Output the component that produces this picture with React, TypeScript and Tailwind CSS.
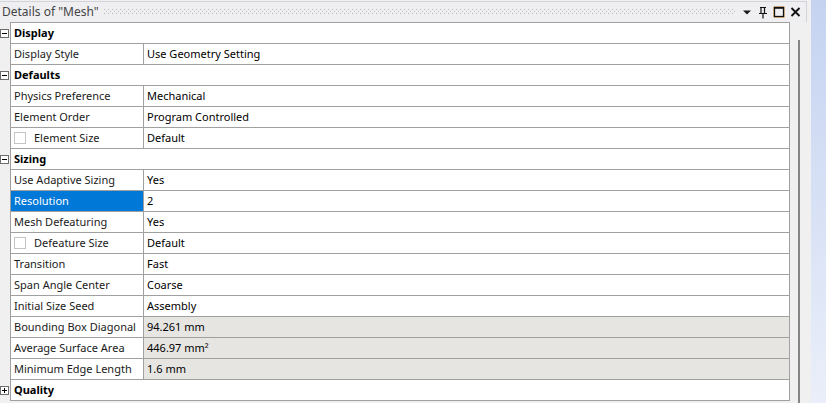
import React from 'react';

type Row =
  | { kind: 'header'; label: string; collapsed?: boolean }
  | { kind: 'prop'; label: string; value: string; check?: boolean; selected?: boolean; readonly?: boolean };

const rows: Row[] = [
  { kind: 'header', label: 'Display' },
  { kind: 'prop', label: 'Display Style', value: 'Use Geometry Setting' },
  { kind: 'header', label: 'Defaults' },
  { kind: 'prop', label: 'Physics Preference', value: 'Mechanical' },
  { kind: 'prop', label: 'Element Order', value: 'Program Controlled' },
  { kind: 'prop', label: 'Element Size', value: 'Default', check: true },
  { kind: 'header', label: 'Sizing' },
  { kind: 'prop', label: 'Use Adaptive Sizing', value: 'Yes' },
  { kind: 'prop', label: 'Resolution', value: '2', selected: true },
  { kind: 'prop', label: 'Mesh Defeaturing', value: 'Yes' },
  { kind: 'prop', label: 'Defeature Size', value: 'Default', check: true },
  { kind: 'prop', label: 'Transition', value: 'Fast' },
  { kind: 'prop', label: 'Span Angle Center', value: 'Coarse' },
  { kind: 'prop', label: 'Initial Size Seed', value: 'Assembly' },
  { kind: 'prop', label: 'Bounding Box Diagonal', value: '94.261 mm', readonly: true },
  { kind: 'prop', label: 'Average Surface Area', value: '446.97 mm²', readonly: true },
  { kind: 'prop', label: 'Minimum Edge Length', value: '1.6 mm', readonly: true },
  { kind: 'header', label: 'Quality', collapsed: true },
];

function ExpandBox({ collapsed }: { collapsed?: boolean }) {
  return (
    <svg width="9" height="9" viewBox="0 0 9 9" className="block">
      <rect x="0.5" y="0.5" width="8" height="8" fill="#fff" stroke="#6d6d6d" />
      <line x1="2" y1="4.5" x2="7" y2="4.5" stroke="#000" />
      {collapsed && <line x1="4.5" y1="2" x2="4.5" y2="7" stroke="#000" />}
    </svg>
  );
}

function TitleIcons() {
  return (
    <div className="flex items-center h-full">
      <svg width="10" height="6" viewBox="0 0 10 6" className="ml-[2px]">
        <path d="M1 1.5h8L5 5.5z" fill="#1a1a1a" />
      </svg>
      <svg width="12" height="13" viewBox="0 0 12 13" className="ml-[5px]">
        <path d="M3 1.5h6M4 1.5v6M7.5 1.5v6M2 7.5h8M6 7.5v5" stroke="#111" strokeWidth="1.2" fill="none" />
      </svg>
      <svg width="12" height="12" viewBox="0 0 12 12" className="ml-[4px]">
        <rect x="1" y="1" width="10" height="10" fill="none" stroke="#d58a2e" strokeWidth="1" />
        <rect x="1.5" y="1.5" width="9" height="9" fill="none" stroke="#111" strokeWidth="1.3" />
        <line x1="1" y1="2" x2="11" y2="2" stroke="#111" strokeWidth="1.5" />
      </svg>
      <svg width="11" height="10" viewBox="0 0 11 10" className="ml-[5px]">
        <path d="M1.5 1l8 8M9.5 1l-8 8" stroke="#111" strokeWidth="1.8" />
      </svg>
    </div>
  );
}

function Grip() {
  return (
    <svg className="flex-1 h-[6px] mx-[5px]" preserveAspectRatio="none">
      <defs>
        <pattern id="dots" width="4" height="4" patternUnits="userSpaceOnUse">
          <rect x="0" y="0" width="1" height="1" fill="#b8b8b8" />
          <rect x="2" y="2" width="1" height="1" fill="#b8b8b8" />
        </pattern>
      </defs>
      <rect width="100%" height="100%" fill="url(#dots)" />
    </svg>
  );
}

function PropRow({ row, first }: { row: Row; first: boolean }) {
  const border = first ? 'border-t border-[#a0a0a0]' : '';
  const h = first ? 'h-[22px]' : 'h-[21px]';
  if (row.kind === 'header') {
    return (
      <div className={`flex ${h}`}>
        <div className="w-[10px] flex items-center">
          <ExpandBox collapsed={row.collapsed} />
        </div>
        <div
          className={`w-[780px] ${border} border-l border-r border-b border-[#a0a0a0] bg-white pl-[3px] pb-[2px] flex items-center font-bold text-black`}
        >
          {row.label}
        </div>
      </div>
    );
  }
  return (
    <div className={`flex ${h}`}>
      <div className="w-[10px]" />
      <div className={`w-[780px] flex ${border} border-l border-r border-b border-[#a0a0a0]`}>
        <div
          className={`w-[133px] shrink-0 border-r border-[#a0a0a0] flex items-center pl-[3px] whitespace-nowrap overflow-hidden ${
            row.selected ? 'bg-[#0078d7] text-white' : 'bg-white text-[#1a1a1a]'
          }`}
        >
          {row.check && (
            <span className="w-[12px] h-[12px] border border-[#c4c4c4] bg-white mr-[8px] shrink-0" />
          )}
          <span className="pb-[2px]">{row.label}</span>
        </div>
        <div
          className={`flex-1 flex items-center pl-[3px] pb-[2px] text-black whitespace-nowrap ${row.readonly ? 'bg-[#e6e5e2]' : 'bg-white'}`}
        >
          {row.value}
        </div>
      </div>
    </div>
  );
}

export default function App() {
  return (
    <div className="w-[826px] h-[403px] flex overflow-hidden font-['Noto_Sans',sans-serif] text-[11px] leading-none">
      <div className="w-[811px] h-full flex flex-col bg-[#f0f0f0]">
        <div className="h-[22px] shrink-0 flex">
          <div className="w-[807px] mt-[1px] border-t border-r border-[#d3d3db] bg-[#efeff2] flex items-center">
            <span className="pl-[2px] text-[12px] text-[#444] whitespace-nowrap">
              Details of "Mesh"
            </span>
            <Grip />
            <TitleIcons />
            <div className="w-[5px]" />
          </div>
        </div>
        <div className="flex flex-1 min-h-0">
          <div className="w-[790px] shrink-0">
            {rows.map((r, i) => (
              <PropRow key={r.label} row={r} first={i === 0} />
            ))}
          </div>
          <div className="flex-1 flex">
            <div className="w-[8px]" />
            <div className="w-[2px] mt-[18px] bg-[#858585]" />
          </div>
        </div>
      </div>
      <div className="flex-1 h-full bg-gradient-to-b from-[#c5d3f1] to-[#eaeff9]" />
    </div>
  );
}
